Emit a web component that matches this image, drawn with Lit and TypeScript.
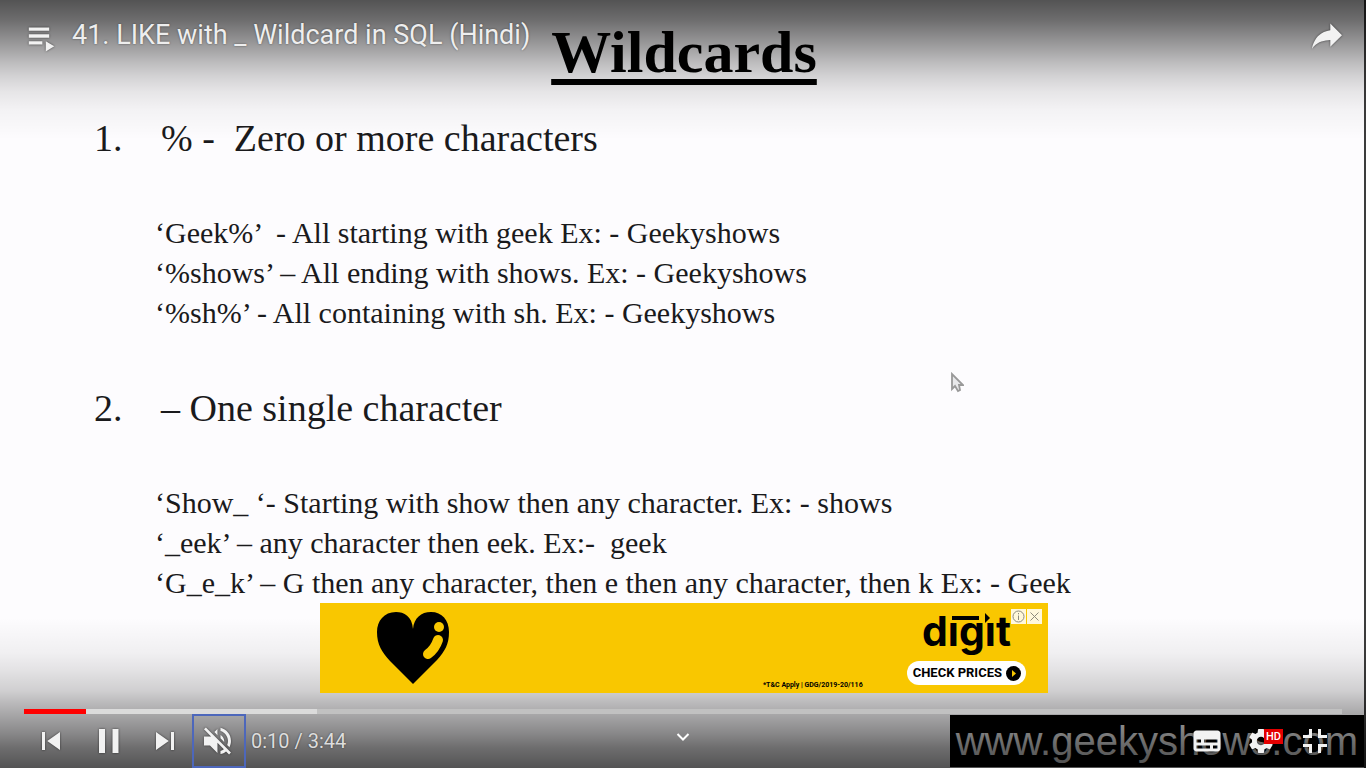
import { LitElement, html, css, svg } from "lit";
import { customElement, property } from "lit/decorators.js";

const ICONS: Record<string, string> = {
  playlist:
    "m 22.53,21.42 0,6.85 5.66,-3.42 -5.66,-3.42 z m -11.33,0 9.06,0 0,2.28 -9.06,0 z m 0,-9.14 13.6,0 0,2.28 -13.6,0 z m 0,4.57 13.6,0 0,2.28 -13.6,0 z",
  share:
    "m 20.20,14.19 0,-4.45 7.79,7.79 -7.79,7.62 0,-4.56 C 16.27,20.69 12.10,21.81 9.34,24.76 8.80,25.13 7.60,27.29 8.12,25.65 9.08,21.32 11.80,17.18 15.98,15.38 c 1.33,-0.60 2.76,-0.98 4.21,-1.19 z",
  previous: "m 12,12 h 2 v 12 h -2 z m 3.5,6 8.5,6 V 12 z",
  pause: "M 12,26 16,26 16,10 12,10 z M 21,26 25,26 25,10 21,10 z",
  next: "M 12,24 20.5,18 12,12 V 24 z M 22,12 v 12 h 2 V 12 h -2 z",
  muted:
    "m 21.48,17.98 c 0,-1.77 -1.02,-3.29 -2.5,-4.03 v 2.21 l 2.45,2.45 c .03,-0.2 .05,-0.41 .05,-0.63 z m 2.5,0 c 0,.94 -0.2,1.82 -0.54,2.64 l 1.51,1.51 c .66,-1.24 1.03,-2.65 1.03,-4.15 0,-4.28 -2.99,-7.86 -7,-8.76 v 2.05 c 2.89,.86 5,3.54 5,6.71 z M 9.25,8.98 l -1.27,1.26 4.72,4.73 H 7.98 v 6 H 11.98 l 5,5 v -6.73 l 4.25,4.25 c -0.67,.52 -1.42,.93 -2.25,1.18 v 2.06 c 1.38,-0.31 2.63,-0.95 3.69,-1.81 l 2.04,2.05 1.27,-1.27 -9,-9 -7.72,-7.72 z m 7.72,.99 -2.09,2.08 2.09,2.09 V 9.98 z",
  subtitles:
    "M11,11 C9.9,11 9,11.9 9,13 L9,23 C9,24.1 9.9,25 11,25 L25,25 C26.1,25 27,24.1 27,23 L27,13 C27,11.9 26.1,11 25,11 Z M11,17 L14,17 L14,19 L11,19 Z M20,23 L11,23 L11,21 L20,21 Z M25,23 L22,23 L22,21 L25,21 Z M25,19 L16,19 L16,17 L25,17 Z",
  settings:
    "m 23.94,18.78 c .03,-0.25 .05,-0.51 .05,-0.78 0,-0.27 -0.02,-0.52 -0.05,-0.78 l 1.68,-1.32 c .15,-0.12 .19,-0.33 .09,-0.51 l -1.6,-2.76 c -0.09,-0.17 -0.31,-0.24 -0.48,-0.17 l -1.99,.8 c -0.41,-0.32 -0.86,-0.58 -1.35,-0.78 l -0.30,-2.12 c -0.02,-0.19 -0.19,-0.33 -0.39,-0.33 l -3.2,0 c -0.2,0 -0.36,.14 -0.39,.33 l -0.30,2.12 c -0.48,.2 -0.93,.47 -1.35,.78 l -1.99,-0.8 c -0.18,-0.07 -0.39,0 -0.48,.17 l -1.6,2.76 c -0.10,.17 -0.05,.39 .09,.51 l 1.68,1.32 c -0.03,.25 -0.05,.52 -0.05,.78 0,.26 .02,.52 .05,.78 l -1.68,1.32 c -0.15,.12 -0.19,.33 -0.09,.51 l 1.6,2.76 c .09,.17 .31,.24 .48,.17 l 1.99,-0.8 c .41,.32 .86,.58 1.35,.78 l .30,2.12 c .02,.19 .19,.33 .39,.33 l 3.2,0 c .2,0 .36,-0.14 .39,-0.33 l .30,-2.12 c .48,-0.2 .93,-0.47 1.35,-0.78 l 1.99,.8 c .18,.07 .39,0 .48,-0.17 l 1.6,-2.76 c .09,-0.17 .05,-0.39 -0.09,-0.51 l -1.68,-1.32 z m -5.94,2.01 c -1.54,0 -2.8,-1.25 -2.8,-2.8 0,-1.54 1.25,-2.8 2.8,-2.8 1.54,0 2.8,1.25 2.8,2.8 0,1.54 -1.25,2.8 -2.8,2.8 z",
  exit:
    "m 14,14 -4,0 0,2 6,0 0,-6 -2,0 0,4 z m 8,0 0,-4 -2,0 0,6 6,0 0,-2 -4,0 z m -2,12 2,0 0,-4 4,0 0,-2 -6,0 0,6 z m -10,-4 4,0 0,4 2,0 0,-6 -6,0 0,2 z",
};

@customElement("player-button")
class PlayerButton extends LitElement {
  @property() icon = "";
  @property() label = "";
  @property() badge = "";
  @property({ type: Boolean, reflect: true }) wide = false;
  @property({ type: Boolean, reflect: true }) active = false;

  static styles = css`
    :host {
      display: block;
      flex: none;
      width: 54px;
      height: 54px;
    }
    :host([wide]) {
      width: 60px;
    }
    .button {
      display: flex;
      justify-content: center;
      position: relative;
      width: 100%;
      height: 100%;
      padding: 0;
      border: 0;
      background: none;
      cursor: pointer;
    }
    :host([active]) .button {
      box-shadow: inset 0 0 0 2px #4d67bb;
    }
    .icon {
      flex: none;
      width: 54px;
      height: 54px;
      fill: #f2f2f2;
      filter: drop-shadow(0 0 1px rgba(0, 0, 0, 0.6));
    }
    .badge {
      position: absolute;
      top: 15px;
      left: 30px;
      padding: 0 2px;
      background: #e40000;
      color: #fff;
      font: 500 11px/15px Roboto, sans-serif;
    }
  `;

  render() {
    return html`<button class="button" type="button" aria-label=${this.label}>
      <svg class="icon" viewBox="0 0 36 36" aria-hidden="true">
        <path fill-rule="evenodd" d=${ICONS[this.icon]}></path>
      </svg>
      ${this.badge ? html`<span class="badge">${this.badge}</span>` : ""}
    </button>`;
  }
}

interface Rule {
  title: string;
  examples: string[];
}

const RULES: Rule[] = [
  {
    title: "% -  Zero or more characters",
    examples: [
      "‘Geek%’  - All starting with geek Ex: - Geekyshows",
      "‘%shows’ – All ending with shows. Ex: - Geekyshows",
      "‘%sh%’ - All containing with sh. Ex: - Geekyshows",
    ],
  },
  {
    title: "– One single character",
    examples: [
      "‘Show_ ‘- Starting with show then any character. Ex: - shows",
      "‘_eek’ – any character then eek. Ex:-  geek",
      "‘G_e_k’ – G then any character, then e then any character, then k Ex: - Geek",
    ],
  },
];

@customElement("lecture-slide")
class LectureSlide extends LitElement {
  static styles = css`
    :host {
      display: flex;
      flex-direction: column;
      box-sizing: border-box;
      min-height: 100vh;
      padding: 22px 0 1px;
      border-right: 2px solid #3c3c3c;
      background: #fdfcfe;
      color: #1a1a1c;
      font-family: "Liberation Serif", serif;
    }
    .title {
      padding-left: 4px;
      margin: 0 0 34px;
      color: #000;
      font-size: 60px;
      line-height: 60px;
      text-align: center;
      text-decoration: underline 6px;
      text-underline-offset: 7px;
      text-decoration-skip-ink: none;
    }
    .rules {
      display: flex;
      flex-direction: column;
      gap: 53px;
      padding: 0 0 0 94px;
      margin: 0;
      list-style: none;
      white-space: pre-wrap;
    }
    .rule {
      display: grid;
      grid-template-columns: 67px 1fr;
      row-gap: 53px;
      font-size: 38px;
      line-height: 44px;
    }
    .examples {
      grid-column: 1 / -1;
      padding-left: 61px;
      font-size: 30px;
      line-height: 40px;
    }
    .example {
      margin: 0;
    }
    .watermark {
      align-self: flex-end;
      margin-top: auto;
      padding: 0 6px;
      background: #000;
      color: #e8e8e8;
      font: 40px/52px "Liberation Sans", sans-serif;
    }
  `;

  render() {
    return html`
      <h1 class="title">Wildcards</h1>
      <ol class="rules">${RULES.map(
        (rule, i) => html`<li class="rule"><span>${i + 1}.</span><span>${rule.title}</span><div class="examples">${rule.examples.map(
          (text) => html`<p class="example">${text}</p>`
        )}</div></li>`
      )}</ol>
      <div class="watermark">www.geekyshows.com</div>
    `;
  }
}

@customElement("banner-ad")
class BannerAd extends LitElement {
  static styles = css`
    :host {
      display: flex;
      align-items: stretch;
      justify-content: space-between;
      position: relative;
      box-sizing: border-box;
      width: 728px;
      max-width: 100%;
      height: 90px;
      padding: 8px 22px 8px 56px;
      background: #f9c700;
      color: #000;
    }
    .heart {
      width: 74px;
      height: 74px;
    }
    .offer {
      display: flex;
      align-items: flex-end;
      gap: 44px;
    }
    .terms {
      margin-bottom: -4px;
      font: 700 7px/8px Roboto, sans-serif;
      text-shadow: none;
    }
    .brand {
      display: flex;
      flex-direction: column;
      align-items: center;
    }
    .logo {
      width: 90px;
      height: 48px;
      overflow: visible;
      text-shadow: none;
    }
    .logo-text {
      font: 700 41px Inter, sans-serif;
    }
    .cta {
      display: flex;
      align-items: center;
      gap: 4px;
      height: 24px;
      padding: 0 5px 0 6px;
      margin-top: 2px;
      border: 0;
      border-radius: 12px;
      background: #fff;
      color: #000;
      font: 700 13px/24px Roboto, sans-serif;
      white-space: nowrap;
    }
    .cta-icon {
      width: 15px;
      height: 15px;
    }
    .choices {
      display: flex;
      gap: 1px;
      position: absolute;
      top: 6px;
      right: 6px;
    }
    .choice {
      width: 15px;
      height: 15px;
      padding: 0;
      border: 0;
      background: #fff8dc;
    }
    .choice-icon {
      display: block;
      width: 15px;
      height: 15px;
      fill: none;
      stroke: #8d8a7c;
    }
  `;

  render() {
    return html`
      <svg class="heart" viewBox="0 0 74 74" aria-hidden="true">
        <path d="M37 18C36 5 28 1 20 1 8 1 1 10 1 21 1 34 6 41 14 50L37 73 61 49C69 40 73 33 73 21 73 9 66 1 55 1 45 1 38 7 37 18Z"></path>
        <circle cx="63" cy="16" r="5" fill="#f9c700"></circle>
        <path d="M62 29Q59 38 52 43" fill="none" stroke="#f9c700" stroke-width="10" stroke-linecap="round"></path>
      </svg>
      <div class="offer">
        <span class="terms">*T&amp;C Apply | GDG/2019-20/116</span>
        <div class="brand">
          <svg class="logo" viewBox="0 0 90 48" role="img" aria-label="digit">
            <text class="logo-text" x="1" y="35">dıgıt</text>
            <rect x="31" y="5" width="27" height="4"></rect>
            <path d="M64 2L69 7L64 12Z"></path>
          </svg>
          <button class="cta" type="button">
            CHECK PRICES
            <svg class="cta-icon" viewBox="0 0 15 15" aria-hidden="true">
              <circle cx="7.5" cy="7.5" r="7.5"></circle>
              <path d="M6 4L10 7.5L6 11Z" fill="#f9c700"></path>
            </svg>
          </button>
        </div>
      </div>
      <div class="choices">
        <button class="choice" type="button" aria-label="About this ad">
          <svg class="choice-icon" viewBox="0 0 15 15">
            ${svg`<circle cx="7.5" cy="7.5" r="5.5"></circle><path d="M7.5 4V5.3M7.5 6.5V11"></path>`}
          </svg>
        </button>
        <button class="choice" type="button" aria-label="Close ad">
          <svg class="choice-icon" viewBox="0 0 15 15">${svg`<path d="M3.5 3.5L11.5 11.5M11.5 3.5L3.5 11.5"></path>`}</svg>
        </button>
      </div>
    `;
  }
}

@customElement("app-root")
class AppRoot extends LitElement {
  @property({ type: Number }) played = 4.7;
  @property({ type: Number }) loaded = 22.2;

  static styles = css`
    :host {
      display: block;
      position: relative;
      min-height: 100vh;
      overflow: hidden;
      background: #fdfcfe;
    }
    .pointer {
      position: absolute;
      left: 950px;
      top: 372px;
      width: 14px;
      height: 21px;
    }
    .chrome {
      display: flex;
      flex-direction: column;
      position: absolute;
      inset: 0;
      color: #eee;
      font-family: Roboto, sans-serif;
      text-shadow: 0 0 2px rgba(0, 0, 0, 0.5);
      background:
        linear-gradient(to bottom, rgba(0, 0, 0, 0.67), rgba(0, 0, 0, 0.57) 20px, rgba(0, 0, 0, 0.46) 35px, rgba(0, 0, 0, 0.35) 50px, rgba(0, 0, 0, 0.25) 63px, rgba(0, 0, 0, 0.17) 76px, rgba(0, 0, 0, 0.09) 92px, rgba(0, 0, 0, 0.04) 110px, transparent 140px) top / 100% 140px no-repeat,
        linear-gradient(to top, rgba(0, 0, 0, 0.67), rgba(0, 0, 0, 0.57) 20px, rgba(0, 0, 0, 0.46) 35px, rgba(0, 0, 0, 0.35) 52px, rgba(0, 0, 0, 0.26) 66px, rgba(0, 0, 0, 0.18) 77px, rgba(0, 0, 0, 0.1) 98px, rgba(0, 0, 0, 0.05) 115px, transparent 150px) bottom / 100% 150px no-repeat;
    }
    .header {
      display: flex;
      align-items: center;
      padding: 9px 12px;
    }
    .name {
      flex: 1;
      height: 54px;
      margin: 0 0 0 6px;
      font-size: 27px;
      font-weight: 400;
      line-height: 52px;
    }
    .ad {
      align-self: center;
      margin: auto 0 16px 2px;
    }
    .seek {
      appearance: none;
      display: block;
      height: 5px;
      margin: 0 24px;
      background: linear-gradient(
        to right,
        #f00 var(--played),
        #dbdbdb var(--played),
        #dbdbdb var(--loaded),
        #c1c1c1 var(--loaded)
      );
    }
    .seek::-webkit-slider-thumb {
      appearance: none;
      width: 0;
      height: 0;
    }
    .controls {
      display: grid;
      grid-template-columns: 1fr auto 1fr;
      height: 54px;
      padding: 0 24px;
    }
    .group {
      display: flex;
      align-items: center;
    }
    .end {
      justify-content: flex-end;
    }
    .time {
      padding-left: 5px;
      color: #ddd;
      font-size: 20px;
      line-height: 52px;
      white-space: nowrap;
    }
    .more {
      height: 46px;
      padding: 0;
      border: 0;
      background: none;
    }
    .more-icon {
      display: block;
      width: 14px;
      height: 10px;
      fill: none;
      stroke: #fff;
      stroke-width: 2;
    }
  `;

  render() {
    return html`
      <lecture-slide></lecture-slide>
      <svg class="pointer" viewBox="0 0 14 21" aria-hidden="true">
        <path d="M2 2V17L5 14L8 19L10 18L9 13H13Z" fill="#e8e8ea" stroke="#999" stroke-width="1.8"></path>
      </svg>
      <div class="chrome">
        <header class="header">
          <player-button icon="playlist" label="Playlist"></player-button>
          <h2 class="name">41. LIKE with _ Wildcard in SQL (Hindi)</h2>
          <player-button icon="share" label="Share"></player-button>
        </header>
        <banner-ad class="ad"></banner-ad>
        <input
          class="seek"
          type="range"
          aria-label="Seek"
          min="0"
          max="224"
          value="10"
          style="--played:${this.played}%;--loaded:${this.loaded}%"
        />
        <div class="controls">
          <div class="group">
            <player-button icon="previous" label="Previous"></player-button>
            <player-button icon="pause" label="Pause" wide></player-button>
            <player-button icon="next" label="Next"></player-button>
            <player-button icon="muted" label="Unmute" active></player-button>
            <span class="time">0:10 / 3:44</span>
          </div>
          <button class="more" type="button" aria-label="More">
            <svg class="more-icon" viewBox="0 0 14 10" aria-hidden="true"><path d="M1.5 2L7 7.5L12.5 2"></path></svg>
          </button>
          <div class="group end">
            <player-button icon="subtitles" label="Subtitles"></player-button>
            <player-button icon="settings" label="Settings" badge="HD"></player-button>
            <player-button icon="exit" label="Exit full screen"></player-button>
          </div>
        </div>
      </div>
    `;
  }
}
